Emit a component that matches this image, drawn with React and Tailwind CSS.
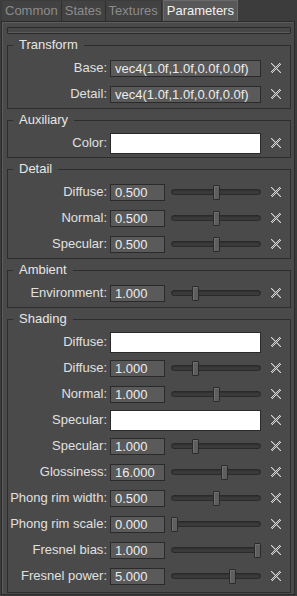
import { useState } from 'react'

const tabs = ['Common', 'States', 'Textures', 'Parameters']

const groups = [
  {
    title: 'Transform',
    rows: [
      { label: 'Base', kind: 'text', value: 'vec4(1.0f,1.0f,0.0f,0.0f)' },
      { label: 'Detail', kind: 'text', value: 'vec4(1.0f,1.0f,0.0f,0.0f)' },
    ],
  },
  {
    title: 'Auxiliary',
    rows: [{ label: 'Color', kind: 'color' }],
  },
  {
    title: 'Detail',
    rows: [
      { label: 'Diffuse', kind: 'slider', value: '0.500', pos: 0.5 },
      { label: 'Normal', kind: 'slider', value: '0.500', pos: 0.5 },
      { label: 'Specular', kind: 'slider', value: '0.500', pos: 0.5 },
    ],
  },
  {
    title: 'Ambient',
    rows: [{ label: 'Environment', kind: 'slider', value: '1.000', pos: 0.25 }],
  },
  {
    title: 'Shading',
    last: true,
    rows: [
      { label: 'Diffuse', kind: 'color' },
      { label: 'Diffuse', kind: 'slider', value: '1.000', pos: 0.25 },
      { label: 'Normal', kind: 'slider', value: '1.000', pos: 0.5 },
      { label: 'Specular', kind: 'color' },
      { label: 'Specular', kind: 'slider', value: '1.000', pos: 0.25 },
      { label: 'Glossiness', kind: 'slider', value: '16.000', pos: 0.6 },
      { label: 'Phong rim width', kind: 'slider', value: '0.500', pos: 0.5 },
      { label: 'Phong rim scale', kind: 'slider', value: '0.000', pos: 0 },
      { label: 'Fresnel bias', kind: 'slider', value: '1.000', pos: 1 },
      { label: 'Fresnel power', kind: 'slider', value: '5.000', pos: 0.7 },
    ],
  },
]

// dithered 10x10 cross, like the old clear button bitmap
const crossPixels = []
for (let y = 0; y < 10; y++) {
  for (let x = 0; x < 10; x++) {
    if (Math.abs(x - y) <= 1 || Math.abs(x + y - 9) <= 1) {
      crossPixels.push({ x, y, light: (x + y) % 2 === 0 })
    }
  }
}

export default function App() {
  const [active, setActive] = useState(3)

  return (
    <div className="w-[297px] h-[596px] bg-[#3c3c3c] font-['Liberation_Sans',Arial,sans-serif] text-[13px] text-[#e0e0e0] flex flex-col overflow-hidden">
      {/* Tab strip */}
      <div className="flex h-[21px] items-end pl-[2px]">
        {tabs.map((t, i) => (
          <button
            key={t}
            onClick={() => setActive(i)}
            className={`h-[20px] px-[3px] border-r border-[#2e2e2e] leading-[20px] ${
              i === active
                ? 'bg-[#585858] text-[#f2f2f2] h-[21px] ml-[1px] border-l border-t border-[#6a6a6a]'
                : 'bg-[#424242] text-[#8c8c8c]'
            }`}
          >
            {t}
          </button>
        ))}
      </div>

      {/* Panel */}
      <div className="ml-[1px] mr-[2px] mb-[1px] flex-1 border border-[#2b2b2b] bg-[#4a4a4a] pl-[5px] pr-[3px] shadow-[inset_1px_1px_0_#5c5c5c]">
        <div className="mt-[5px] h-[7px] rounded-[1px] border border-[#2a2a2a] bg-[#474747] shadow-[inset_0_-1px_0_#5a5a5a]" />

        <div className="mt-[3px] flex flex-col gap-[3px]">
          {groups.map((g) => (
            <fieldset
              key={g.title}
              className={`border border-[#2d2d2d] ${g.last ? 'pb-[3px]' : 'pb-[1px]'}`}
            >
              <legend className="ml-[5px] px-[6px] leading-[16px] text-[#e6e6e6]">{g.title}</legend>
              <div className="pt-[2px]">
                {g.rows.map((r, i) => (
                  <Row key={i} row={r} />
                ))}
              </div>
            </fieldset>
          ))}
        </div>
      </div>
    </div>
  )
}

function Row({ row }) {
  return (
    <div className="flex h-[26px] items-center">
      <span className="w-[99px] shrink-0 text-right whitespace-nowrap">{row.label}:</span>
      <div className="ml-[3px] flex w-[151px] items-center">
        {row.kind === 'text' && (
          <div className="h-[17px] w-full border border-[#2a2a2a] bg-[#5a5a5a] pl-[4px] leading-[15px] text-[#ececec] whitespace-nowrap overflow-hidden">
            {row.value}
          </div>
        )}
        {row.kind === 'color' && (
          <div className="h-[21px] w-full border border-[#2a2a2a] bg-white" />
        )}
        {row.kind === 'slider' && (
          <>
            <div className="h-[17px] w-[55px] shrink-0 border border-[#2a2a2a] bg-[#5a5a5a] pl-[4px] leading-[15px] text-[#ececec]">
              {row.value}
            </div>
            <Slider pos={row.pos} />
          </>
        )}
      </div>
      <ClearIcon />
    </div>
  )
}

function Slider({ pos }) {
  // track is 90px, handle 7px
  const left = Math.round(pos * 83)
  return (
    <div className="relative ml-[6px] flex h-[15px] w-[90px] items-center">
      <div className="h-[6px] w-full rounded-full border border-[#2a2a2a] bg-[#3a3a3a] shadow-[inset_0_1px_0_#303030]" />
      <div
        className="absolute top-0 h-[15px] w-[7px] rounded-[1px] border border-[#2a2a2a] bg-[#5e5e5e] shadow-[inset_1px_1px_0_#707070]"
        style={{ left }}
      />
    </div>
  )
}

function ClearIcon() {
  return (
    <svg width="10" height="10" viewBox="0 0 10 10" className="ml-[10px] shrink-0" shapeRendering="crispEdges">
      {crossPixels.map((p) => (
        <rect
          key={`${p.x}-${p.y}`}
          x={p.x}
          y={p.y}
          width="1"
          height="1"
          fill={p.light ? '#d4d4d4' : '#6e6e6e'}
        />
      ))}
    </svg>
  )
}
